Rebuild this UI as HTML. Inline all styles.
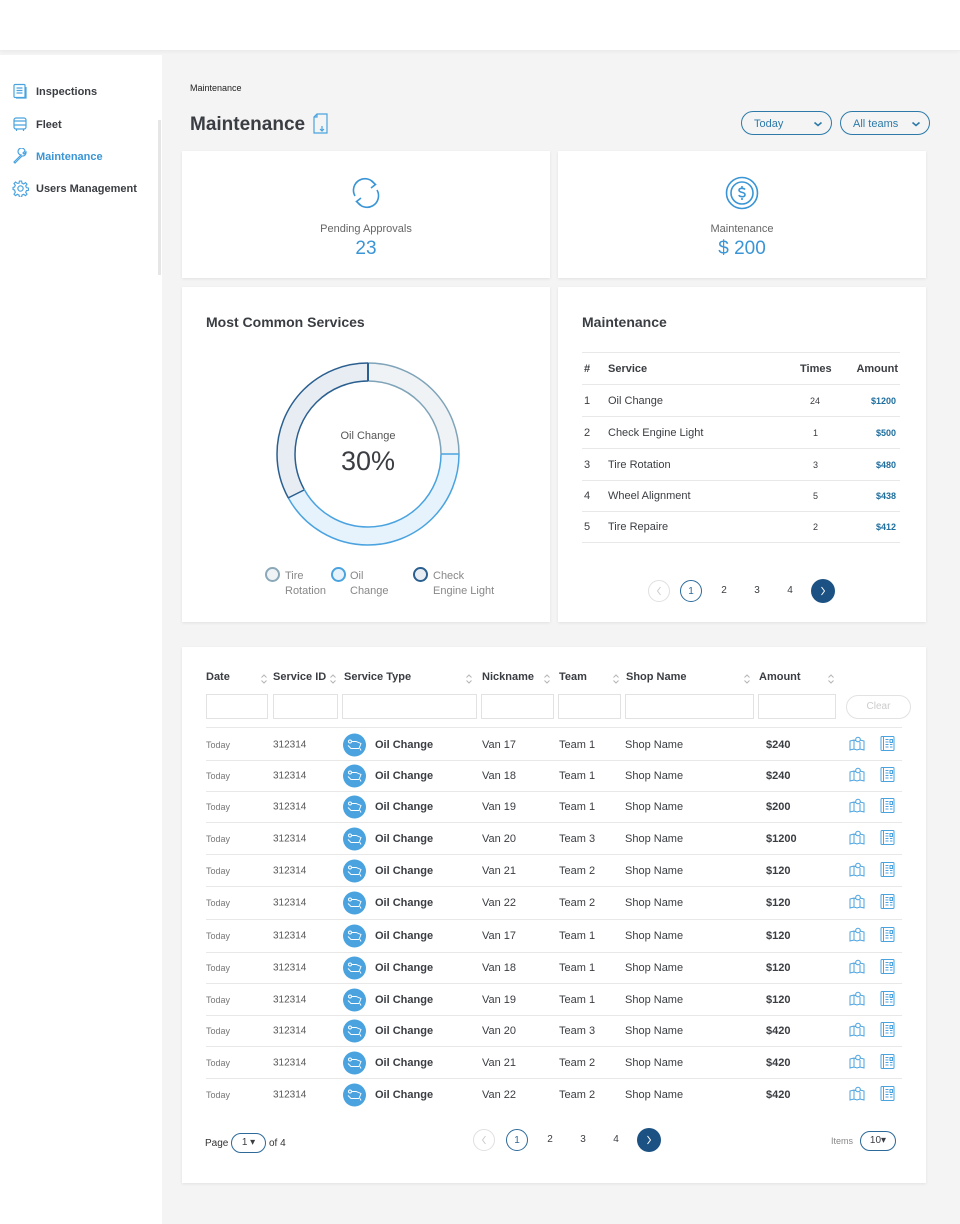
<!DOCTYPE html>
<html><head><meta charset="utf-8"><style>
*{box-sizing:border-box;margin:0;padding:0}
body{width:960px;height:1224px;background:#f4f4f4;font-family:"Liberation Sans",sans-serif;color:#3a3d42;position:relative;overflow:hidden}
.a{position:absolute}
.card{position:absolute;background:#fff;box-shadow:0 1px 3px rgba(0,0,0,.08)}
.nav{position:absolute;left:36px;font-size:11px;font-weight:bold;color:#3a3d42}
.th{position:absolute;font-size:11px;font-weight:bold;color:#3a3d42}
.sort{position:absolute}
.inp{position:absolute;top:694px;height:25px;border:1px solid #e2e2e2;background:#fff}
.row{position:absolute;left:206px;width:696px;height:32px;border-bottom:1px solid #e8e8e8;font-size:11px}
.row span{position:absolute;top:50%;transform:translateY(-50%)}
.mt{position:absolute;left:582px;width:318px;height:32px;border-bottom:1px solid #e8e8e8;font-size:11px}
.mt span{position:absolute;top:50%;transform:translateY(-50%)}
.pg{position:absolute;width:22px;height:22px;border-radius:50%;font-size:10px;text-align:center;line-height:22px}
.pg svg{position:absolute;left:50%;top:50%;transform:translate(-50%,-50%)}
</style></head><body>
<svg width="0" height="0" style="position:absolute"><defs>
<symbol id="srt" viewBox="0 0 8 12"><path d="M1.5 4.5L4 2l2.5 2.5M1.5 7.5L4 10l2.5-2.5" fill="none" stroke="#b5b5b5" stroke-width="1"/></symbol>
<symbol id="chv" viewBox="0 0 10 6"><path d="M1.5 1.5L5 4.5l3.5-3" fill="none" stroke="#2d7aa8" stroke-width="1.6"/></symbol>
</defs></svg>
<div class="a" style="left:0;top:0;width:960px;height:50px;background:#fff;box-shadow:0 1px 4px rgba(0,0,0,.06)"></div>
<div class="a" style="left:0;top:55px;width:162px;height:1169px;background:#fff"></div>
<div class="a" style="left:158px;top:120px;width:3px;height:155px;background:#e6e6e6"></div>

<svg class="a" style="left:12px;top:83px" width="16" height="16" viewBox="0 0 16 16" fill="none" stroke="#4aa3df" stroke-width="1.2"><rect x="2" y="1.5" width="11" height="13" rx="1"/><path d="M4.5 5h6M4.5 7.5h6M4.5 10h6M14 4v11H4"/></svg>
<div class="nav" style="top:86px">Inspections</div>
<svg class="a" style="left:12px;top:116px" width="16" height="16" viewBox="0 0 16 16" fill="none" stroke="#4aa3df" stroke-width="1.2"><rect x="2" y="2" width="12" height="11" rx="2"/><path d="M2 9h12M2 5h12M4.5 13v2M11.5 13v2"/></svg>
<div class="nav" style="top:119px">Fleet</div>
<svg class="a" style="left:12px;top:148px" width="16" height="16" viewBox="0 0 16 16" fill="none" stroke="#4aa3df" stroke-width="1.2"><path d="M2 14l7-7a3.5 3.5 0 1 1 4-4l-2 2 1 1 2-2a3.5 3.5 0 0 1-4 4l-7 7z"/></svg>
<div class="nav" style="top:151px;color:#3a95d6">Maintenance</div>
<svg class="a" style="left:12px;top:180px" width="17" height="17" viewBox="0 0 16 16" fill="none" stroke="#4aa3df" stroke-width="1.1"><circle cx="8" cy="8" r="2.5"/><path d="M7 1h2l.4 2 1.6.7 1.7-1.2 1.4 1.4-1.2 1.7.7 1.6 2 .4v2l-2 .4-.7 1.6 1.2 1.7-1.4 1.4-1.7-1.2-1.6.7-.4 2H7l-.4-2-1.6-.7-1.7 1.2-1.4-1.4 1.2-1.7L2.4 9.4 1 9V7l1.4-.4.7-1.6-1.2-1.7 1.4-1.4 1.7 1.2L6.6 3z"/></svg>
<div class="nav" style="top:183px">Users Management</div>

<div class="a" style="left:190px;top:83px;font-size:9px;color:#222">Maintenance</div>
<div class="a" style="left:190px;top:114px;font-size:19px;font-weight:bold;color:#3a3d42">Maintenance</div>
<svg class="a" style="left:312px;top:113px" width="16" height="21" viewBox="0 0 16 21" fill="none" stroke="#4aa3df" stroke-width="1.2"><path d="M5 1h10v19H2V4zM5 1v3H2M10 13v5M8 16l2 2 2-2"/></svg>

<div class="a" style="left:741px;top:111px;width:91px;height:24px;border:1px solid #2d7aa8;border-radius:12px;font-size:11px;color:#2d7aa8;padding:6px 0 0 12px">Today<svg style="position:absolute;right:8px;top:9px" width="10" height="6"><use href="#chv"/></svg></div>
<div class="a" style="left:840px;top:111px;width:90px;height:24px;border:1px solid #2d7aa8;border-radius:12px;font-size:11px;color:#2d7aa8;padding:6px 0 0 12px">All teams<svg style="position:absolute;right:8px;top:9px" width="10" height="6"><use href="#chv"/></svg></div>

<div class="card" style="left:182px;top:151px;width:368px;height:127px"></div>
<div class="card" style="left:558px;top:151px;width:368px;height:127px"></div>
<svg class="a" style="left:350px;top:176px" width="32" height="34" viewBox="0 0 32 34" fill="none" stroke="#3a95d6" stroke-width="1.6"><path d="M5 20A11.5 11.5 0 0 1 25 8.5M27 14A11.5 11.5 0 0 1 7 25.5M21 4.5l4.5 4-4.5 3.5M11 29.5l-4.5-4 4.5-3.5"/></svg>
<div class="a" style="left:182px;top:223px;width:368px;text-align:center;font-size:11px;color:#666">Pending Approvals</div>
<div class="a" style="left:182px;top:238px;width:368px;text-align:center;font-size:19px;color:#3a95d6">23</div>
<svg class="a" style="left:725px;top:176px" width="34" height="34" viewBox="0 0 34 34" fill="none" stroke="#3a95d6" stroke-width="1.6"><circle cx="17" cy="17" r="15.5"/><circle cx="17" cy="17" r="11"/><path d="M20 13.5c-1-1.5-6-2-6 .8s6 1.4 6 4.3-5 2.5-6.3.6M17 10v2M17 22v2"/></svg>
<div class="a" style="left:558px;top:223px;width:368px;text-align:center;font-size:11px;color:#666">Maintenance</div>
<div class="a" style="left:558px;top:238px;width:368px;text-align:center;font-size:19px;color:#3a95d6">$ 200</div>

<div class="card" style="left:182px;top:287px;width:368px;height:335px"></div>
<div class="card" style="left:558px;top:287px;width:368px;height:335px"></div>
<div class="a" style="left:206px;top:314px;font-size:14px;font-weight:bold;color:#3a3d42">Most Common Services</div>
<div class="a" style="left:582px;top:314px;font-size:14px;font-weight:bold;color:#3a3d42">Maintenance</div>

<svg class="a" style="left:268px;top:354px" width="200" height="200" viewBox="0 0 200 200">
<g transform="rotate(-90 100 100)" fill="none">
<circle cx="100" cy="100" r="82" stroke="#eff3f6" stroke-width="18" stroke-dasharray="128.8 600"/>
<circle cx="100" cy="100" r="82" stroke="#e7f3fc" stroke-width="18" stroke-dasharray="0 128.8 216.1 600"/>
<circle cx="100" cy="100" r="82" stroke="#e8edf4" stroke-width="18" stroke-dasharray="0 344.9 171 600"/>
<circle cx="100" cy="100" r="91" stroke="#7fa3b8" stroke-width="1.5" stroke-dasharray="143 600"/>
<circle cx="100" cy="100" r="73" stroke="#7fa3b8" stroke-width="1.5" stroke-dasharray="114.7 600"/>
<circle cx="100" cy="100" r="91" stroke="#4aa3df" stroke-width="1.5" stroke-dasharray="0 143 240 600"/>
<circle cx="100" cy="100" r="73" stroke="#4aa3df" stroke-width="1.5" stroke-dasharray="0 114.7 192.5 600"/>
<circle cx="100" cy="100" r="91" stroke="#2a5f8f" stroke-width="1.5" stroke-dasharray="0 383 189 600"/>
<circle cx="100" cy="100" r="73" stroke="#2a5f8f" stroke-width="1.5" stroke-dasharray="0 307.2 152 600"/>
</g>
<path d="M100 9V27" stroke="#2a5f8f" stroke-width="2"/>
<path d="M173 100H191" stroke="#4aa3df" stroke-width="1.5"/>
<path d="M36 136L20 144" stroke="#2a5f8f" stroke-width="1.5"/>
<text x="100" y="85" text-anchor="middle" font-size="11" fill="#555" font-family="Liberation Sans">Oil Change</text>
<text x="100" y="116" text-anchor="middle" font-size="27" fill="#3a3d42" font-family="Liberation Sans">30%</text>
</svg>
<div class="a" style="left:265px;top:567px;width:15px;height:15px;border-radius:50%;border:2px solid #8aa8b8;background:#eff3f6"></div>
<div class="a" style="left:285px;top:569px;font-size:11px;color:#888;line-height:15px">Tire<br>Rotation</div>
<div class="a" style="left:331px;top:567px;width:15px;height:15px;border-radius:50%;border:2px solid #4aa3df;background:#e7f3fc"></div>
<div class="a" style="left:350px;top:569px;font-size:11px;color:#888;line-height:15px">Oil<br>Change</div>
<div class="a" style="left:413px;top:567px;width:15px;height:15px;border-radius:50%;border:2px solid #2a5f8f;background:#e8edf4"></div>
<div class="a" style="left:433px;top:569px;font-size:11px;color:#888;line-height:15px">Check<br>Engine Light</div>

<div class="a" style="left:582px;top:352px;width:318px;border-top:1px solid #e8e8e8"></div>
<div class="mt" style="top:353px;font-weight:bold"><span style="left:2px">#</span><span style="left:26px">Service</span><span style="left:218px">Times</span><span style="right:2px">Amount</span></div>
<div class="mt" style="top:385px"><span style="left:2px">1</span><span style="left:26px">Oil Change</span><span style="left:228px;font-size:9px">24</span><span style="right:4px;font-size:9px;color:#1e6e9e;font-weight:bold">$1200</span></div>
<div class="mt" style="top:417px"><span style="left:2px">2</span><span style="left:26px">Check Engine Light</span><span style="left:231px;font-size:9px">1</span><span style="right:4px;font-size:9px;color:#1e6e9e;font-weight:bold">$500</span></div>
<div class="mt" style="top:449px"><span style="left:2px">3</span><span style="left:26px">Tire Rotation</span><span style="left:231px;font-size:9px">3</span><span style="right:4px;font-size:9px;color:#1e6e9e;font-weight:bold">$480</span></div>
<div class="mt" style="top:480px"><span style="left:2px">4</span><span style="left:26px">Wheel Alignment</span><span style="left:231px;font-size:9px">5</span><span style="right:4px;font-size:9px;color:#1e6e9e;font-weight:bold">$438</span></div>
<div class="mt" style="top:511px"><span style="left:2px">5</span><span style="left:26px">Tire Repaire</span><span style="left:231px;font-size:9px">2</span><span style="right:4px;font-size:9px;color:#1e6e9e;font-weight:bold">$412</span></div>
<div class="pg" style="left:648px;top:580px;border:1px solid #e0e0e0"><svg width="6" height="10"><path d="M4.5 1L1.5 5l3 4" fill="none" stroke="#ccc"/></svg></div>
<div class="pg" style="left:680px;top:580px;border:1px solid #2d6a9a;color:#2d6a9a">1</div>
<div class="pg" style="left:713px;top:580px">2</div>
<div class="pg" style="left:746px;top:580px">3</div>
<div class="pg" style="left:779px;top:580px">4</div>
<div class="pg" style="left:811px;top:579px;width:24px;height:24px;background:#1c5283"><svg width="6" height="10"><path d="M1.5 1l3 4-3 4" fill="none" stroke="#fff"/></svg></div>

<div class="card" style="left:182px;top:647px;width:744px;height:536px"></div>
<div class="th" style="left:206px;top:671px">Date</div><svg class="sort" style="left:260px;top:673px" width="8" height="12"><use href="#srt"/></svg>
<div class="th" style="left:273px;top:671px">Service ID</div><svg class="sort" style="left:329px;top:673px" width="8" height="12"><use href="#srt"/></svg>
<div class="th" style="left:344px;top:671px">Service Type</div><svg class="sort" style="left:465px;top:673px" width="8" height="12"><use href="#srt"/></svg>
<div class="th" style="left:482px;top:671px">Nickname</div><svg class="sort" style="left:543px;top:673px" width="8" height="12"><use href="#srt"/></svg>
<div class="th" style="left:559px;top:671px">Team</div><svg class="sort" style="left:612px;top:673px" width="8" height="12"><use href="#srt"/></svg>
<div class="th" style="left:626px;top:671px">Shop Name</div><svg class="sort" style="left:743px;top:673px" width="8" height="12"><use href="#srt"/></svg>
<div class="th" style="left:759px;top:671px">Amount</div><svg class="sort" style="left:827px;top:673px" width="8" height="12"><use href="#srt"/></svg>
<div class="inp" style="left:206px;width:62px"></div>
<div class="inp" style="left:273px;width:65px"></div>
<div class="inp" style="left:342px;width:135px"></div>
<div class="inp" style="left:481px;width:73px"></div>
<div class="inp" style="left:558px;width:63px"></div>
<div class="inp" style="left:625px;width:129px"></div>
<div class="inp" style="left:758px;width:78px"></div>
<div class="a" style="left:846px;top:695px;width:65px;height:24px;border:1px solid #e2e2e2;border-radius:12px;font-size:10px;color:#ccc;text-align:center;line-height:22px">Clear</div>
<div class="a" style="left:206px;top:727px;width:696px;border-top:1px solid #e8e8e8"></div>

<div id="rows"></div>
<script>
var d=[["Van 17","Team 1","$240"],["Van 18","Team 1","$240"],["Van 19","Team 1","$200"],["Van 20","Team 3","$1200"],["Van 21","Team 2","$120"],["Van 22","Team 2","$120"],["Van 17","Team 1","$120"],["Van 18","Team 1","$120"],["Van 19","Team 1","$120"],["Van 20","Team 3","$420"],["Van 21","Team 2","$420"],["Van 22","Team 2","$420"]];
var tops=[729,761,792,823,855,887,920,953,984,1016,1047,1079];
var h="";
for(var i=0;i<12;i++){var t=tops[i],hh=(i<11?tops[i+1]:1111)-t;
h+='<div class="row" style="top:'+t+'px;height:'+hh+'px'+(i==11?';border-bottom:none':'')+'"><span style="left:0;font-size:9px;color:#777">Today</span><span style="left:67px;font-size:10px;color:#555">312314</span>'+
'<span style="left:137px;width:23px;height:23px;border-radius:50%;background:#4aa3df"><svg width="23" height="23" viewBox="0 0 23 23" fill="none" stroke="#fff" stroke-width="0.9"><circle cx="7" cy="8" r="1.5"/><path d="M8 8h5l5 2-2 5H8l-3-3M17 15l1 2"/></svg></span>'+
'<span style="left:169px;font-weight:bold">Oil Change</span><span style="left:276px">'+d[i][0]+'</span><span style="left:353px">'+d[i][1]+'</span><span style="left:419px">Shop Name</span><span style="left:560px;font-weight:bold">'+d[i][2]+'</span>'+
'<span style="left:643px"><svg width="16" height="15" viewBox="0 0 16 15" fill="none" stroke="#4aa3df" stroke-width="1"><path d="M1 5l4-1 3 1 3-1 4 1v9l-4-1-3 1-3-1-4 1zM5 4v9M11 6v7"/><circle cx="9" cy="3.5" r="2.3" fill="#fff"/></svg></span>'+
'<span style="left:674px"><svg width="15" height="16" viewBox="0 0 15 16" fill="none" stroke="#4aa3df" stroke-width="1"><rect x="1" y="1" width="13" height="14" rx="1"/><path d="M3.5 1v14M5.5 4h3M5.5 6.5h3M5.5 9h3M5.5 11.5h3M10 4h2.5v3H10zM10 9h2.5M10 11.5h2.5"/></svg></span></div>';}
document.getElementById("rows").innerHTML=h;
</script>

<div class="a" style="left:205px;top:1138px;font-size:10px;color:#333">Page</div>
<div class="a" style="left:231px;top:1133px;width:35px;height:20px;border:1px solid #2d6a9a;border-radius:10px;font-size:10px;text-align:center;line-height:18px">1 &#9662;</div>
<div class="a" style="left:269px;top:1138px;font-size:10px;color:#333">of 4</div>
<div class="pg" style="left:473px;top:1129px;border:1px solid #e0e0e0"><svg width="6" height="10"><path d="M4.5 1L1.5 5l3 4" fill="none" stroke="#ccc"/></svg></div>
<div class="pg" style="left:506px;top:1129px;border:1px solid #2d6a9a;color:#2d6a9a">1</div>
<div class="pg" style="left:539px;top:1129px">2</div>
<div class="pg" style="left:572px;top:1129px">3</div>
<div class="pg" style="left:605px;top:1129px">4</div>
<div class="pg" style="left:637px;top:1128px;width:24px;height:24px;background:#1c5283"><svg width="6" height="10"><path d="M1.5 1l3 4-3 4" fill="none" stroke="#fff"/></svg></div>
<div class="a" style="left:831px;top:1136px;font-size:9px;color:#888">Items</div>
<div class="a" style="left:860px;top:1131px;width:36px;height:20px;border:1px solid #2d6a9a;border-radius:10px;font-size:10px;text-align:center;line-height:18px">10&#9662;</div>
</body></html>
